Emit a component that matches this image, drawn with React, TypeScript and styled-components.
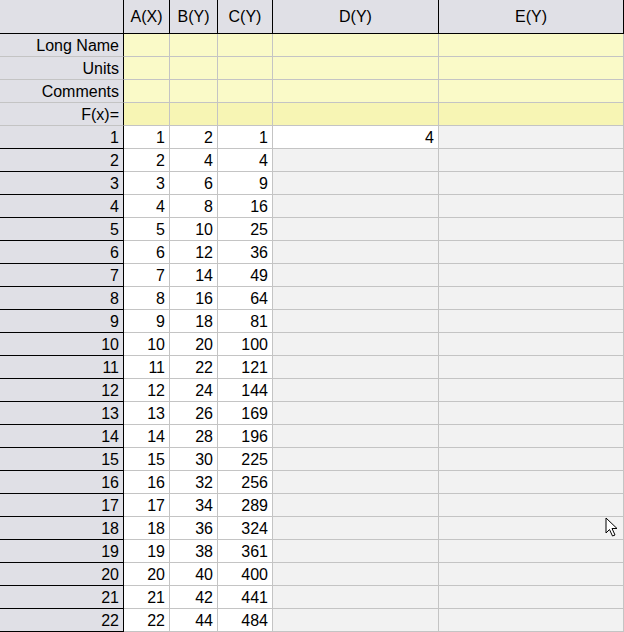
import styled, { createGlobalStyle } from "styled-components"

const GlobalStyle = createGlobalStyle`
    html, body {
        margin: 0;
        padding: 0;
        background: #f2f2f2;
        overflow: hidden;
    }

    body {
        font-family: "Liberation Sans", Arial, sans-serif;
    }
`

const Sheet = styled.div`
    position: relative;
    width: 624px;
    height: 632px;
    overflow: hidden;
    display: grid;
    grid-template-columns: 124px 46px 48px 55px 166px 185px;
    grid-auto-rows: 23px;
    grid-template-rows: 34px;
    font-size: 16px;
    color: #000;
    background: #f2f2f2;
`

const Corner = styled.div`
    background: #e0e0e6;
    border-right: 1px solid #000;
    border-bottom: 1px solid #000;
`

const ColumnHeader = styled.div`
    background: #e0e0e6;
    border-right: 1px solid #000;
    border-bottom: 1px solid #000;
    display: flex;
    align-items: center;
    justify-content: center;
    padding-top: 1px;
    box-sizing: border-box;
`

const RowLabel = styled.div<{ $data?: boolean }>`
    background: #e0e0e6;
    border-right: 1px solid #000;
    border-bottom: 1px solid ${p => (p.$data ? "#000" : "#c4c4c4")};
    display: flex;
    align-items: center;
    justify-content: flex-end;
    padding: 1px 4px 0 0;
    white-space: nowrap;
`

const Cell = styled.div<{ $bg: string }>`
    background: ${p => p.$bg};
    border-right: 1px solid #c4c4c4;
    border-bottom: 1px solid #c4c4c4;
    display: flex;
    align-items: center;
    justify-content: flex-end;
    padding: 1px 4px 0 0;
`

const Cursor = styled.svg`
    position: absolute;
    left: 605px;
    top: 517px;
    width: 14px;
    height: 21px;
    pointer-events: none;
`

const columns = ["A(X)", "B(Y)", "C(Y)", "D(Y)", "E(Y)"]
const metaRows = ["Long Name", "Units", "Comments", "F(x)="]

function cellValue(col: number, row: number) {
    if (col === 0) return row
    if (col === 1) return row * 2
    if (col === 2) return row * row
    if (col === 3 && row === 1) return 4
    return ""
}

function cellBg(col: number, row: number) {
    if (col < 3) return "#ffffff"
    if (col === 3 && row === 1) return "#ffffff"
    return "#f2f2f2"
}

export default function App() {
    const rows = Array.from({ length: 22 }, (_, i) => i + 1)

    return (
        <>
            <GlobalStyle />
            <Sheet>
                <Corner />
                {columns.map(c => <ColumnHeader key={c}>{c}</ColumnHeader>)}

                {metaRows.map(label => (
                    <>
                        <RowLabel key={label}>{label}</RowLabel>
                        {columns.map(c => (
                            <Cell key={label + c} $bg={label === "F(x)=" ? "#f7f5b4" : "#fafac8"} />
                        ))}
                    </>
                ))}

                {rows.map(r => (
                    <>
                        <RowLabel key={"r" + r} $data>{r}</RowLabel>
                        {columns.map((c, ci) => (
                            <Cell key={r + c} $bg={cellBg(ci, r)}>{cellValue(ci, r)}</Cell>
                        ))}
                    </>
                ))}

                <Cursor viewBox="0 0 14 21">
                    <path
                        d="M1 1 L1 16 L4.5 12.5 L7.5 19 L10 18 L7 11.5 L12 11.5 Z"
                        fill="#fff"
                        stroke="#000"
                        strokeWidth="1"
                        strokeLinejoin="miter"
                    />
                </Cursor>
            </Sheet>
        </>
    )
}
